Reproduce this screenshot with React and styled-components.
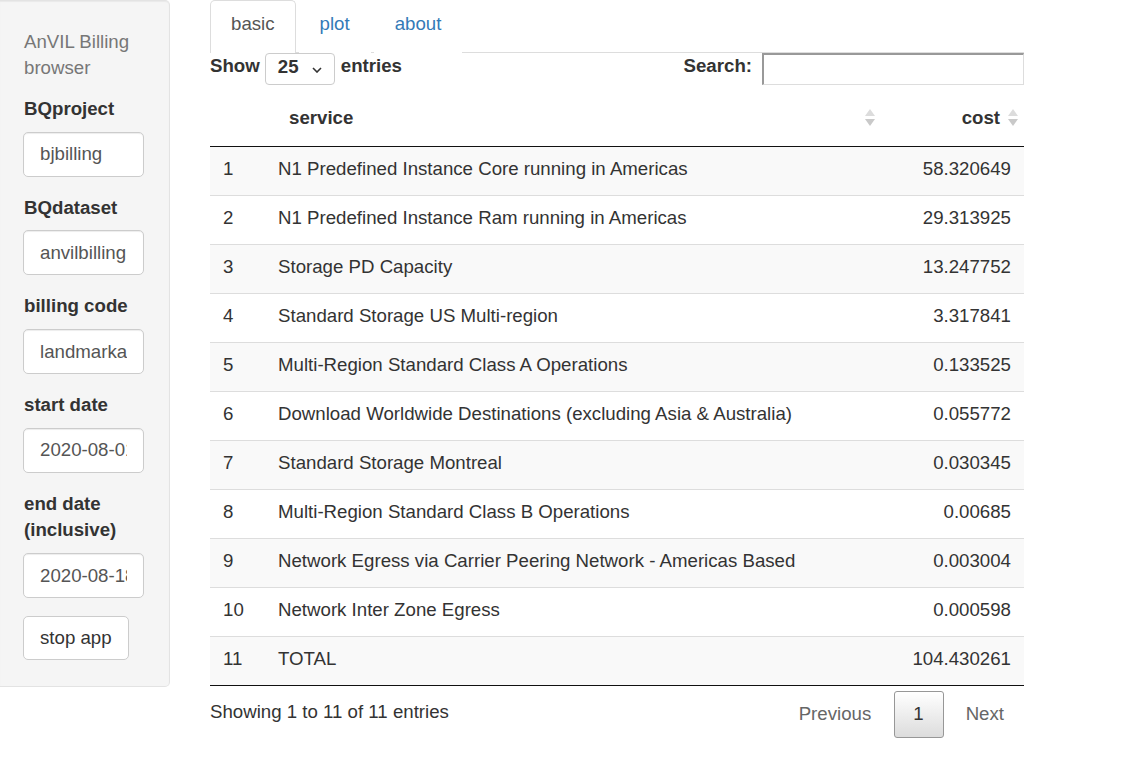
import React from 'react';
import styled, { createGlobalStyle } from 'styled-components';

const rows = [
    ['N1 Predefined Instance Core running in Americas', '58.320649'],
    ['N1 Predefined Instance Ram running in Americas', '29.313925'],
    ['Storage PD Capacity', '13.247752'],
    ['Standard Storage US Multi-region', '3.317841'],
    ['Multi-Region Standard Class A Operations', '0.133525'],
    ['Download Worldwide Destinations (excluding Asia & Australia)', '0.055772'],
    ['Standard Storage Montreal', '0.030345'],
    ['Multi-Region Standard Class B Operations', '0.00685'],
    ['Network Egress via Carrier Peering Network - Americas Based', '0.003004'],
    ['Network Inter Zone Egress', '0.000598'],
    ['TOTAL', '104.430261'],
];

const fields = [
    { label: 'BQproject', value: 'bjbilling' },
    { label: 'BQdataset', value: 'anvilbilling' },
    { label: 'billing code', value: 'landmarkanvil' },
    { label: 'start date', value: '2020-08-01' },
    { label: 'end date (inclusive)', value: '2020-08-18' },
];

const SortIcon = () => (
    <StyledSortIcon width="12" height="20" viewBox="0 0 12 20">
        <polygon points="6,1 11,8 1,8" fill="#dcdcdc" />
        <polygon points="1,11 11,11 6,18" fill="#c9c9c9" />
    </StyledSortIcon>
);

const App = () => {
    return (
        <StyledPage>
            <GlobalStyle />
            <StyledSidebar>
                <StyledTitle>AnVIL Billing browser</StyledTitle>
                {fields.map(f => (
                    <StyledFormGroup key={f.label}>
                        <StyledLabel>{f.label}</StyledLabel>
                        <StyledInput readOnly defaultValue={f.value} />
                    </StyledFormGroup>
                ))}
                <StyledButton>stop app</StyledButton>
            </StyledSidebar>

            <StyledMain>
                <StyledTabs>
                    <StyledTab active>basic</StyledTab>
                    <StyledTab>plot</StyledTab>
                    <StyledTab>about</StyledTab>
                </StyledTabs>

                <StyledControls>
                    <StyledControlLabel>
                        Show
                        <StyledSelect>
                            25
                            <svg width="10" height="6" viewBox="0 0 10 6">
                                <path d="M1 1 L5 5 L9 1" fill="none" stroke="#333" strokeWidth="1.6" />
                            </svg>
                        </StyledSelect>
                        entries
                    </StyledControlLabel>
                    <StyledControlLabel>
                        Search:
                        <StyledSearch />
                    </StyledControlLabel>
                </StyledControls>

                <StyledTable>
                    <colgroup>
                        <col style={{ width: 55 }} />
                        <col style={{ width: 616 }} />
                        <col style={{ width: 143 }} />
                    </colgroup>
                    <thead>
                        <tr>
                            <StyledTh />
                            <StyledTh>service<SortIcon /></StyledTh>
                            <StyledTh right>cost<SortIcon /></StyledTh>
                        </tr>
                    </thead>
                    <tbody>
                        {rows.map((r, i) => (
                            <StyledTr key={i} odd={i % 2 === 0}>
                                <StyledTd>{i + 1}</StyledTd>
                                <StyledTd>{r[0]}</StyledTd>
                                <StyledTd right>{r[1]}</StyledTd>
                            </StyledTr>
                        ))}
                    </tbody>
                </StyledTable>

                <StyledFooter>
                    <StyledInfo>Showing 1 to 11 of 11 entries</StyledInfo>
                    <StyledPaging>
                        <StyledPageBtn>Previous</StyledPageBtn>
                        <StyledPageBtn current>1</StyledPageBtn>
                        <StyledPageBtn>Next</StyledPageBtn>
                    </StyledPaging>
                </StyledFooter>
            </StyledMain>
        </StyledPage>
    );
};

export default App;

const GlobalStyle = createGlobalStyle`
    body {
        margin: 0;
        background: #fff;
        color: #333;
        font-family: "Liberation Sans", Arial, sans-serif;
        font-size: 18.67px;
        line-height: 26.67px;
    }
`;

const StyledPage = styled.div`
    display: flex;
    align-items: flex-start;
`;

const StyledSidebar = styled.div`
    width: 170px;
    box-sizing: border-box;
    background-color: #f5f5f5;
    border: 1px solid #e3e3e3;
    border-left: none;
    border-radius: 0 5px 5px 0;
    padding: 25px 20px 26px 23px;
    box-shadow: inset 0 1px 1px rgba(0, 0, 0, 0.05);
`;

const StyledTitle = styled.div`
    color: #777;
    margin: 3px 0 15px 1px;
    line-height: 26px;
`;

const StyledFormGroup = styled.div`
    margin-bottom: 18px;
`;

const StyledLabel = styled.div`
    font-weight: bold;
    margin: 0 0 9px 1px;
`;

const StyledInput = styled.input`
    display: block;
    width: 121px;
    height: 45px;
    box-sizing: border-box;
    padding: 0 16px;
    border: 1px solid #ccc;
    border-radius: 5px;
    background: #fff;
    color: #555;
    font-family: "Liberation Sans", Arial, sans-serif;
    font-size: 18.67px;
    box-shadow: inset 0 1px 1px rgba(0, 0, 0, 0.075);
    outline: none;
`;

const StyledButton = styled.button`
    display: block;
    margin-top: 5px;
    height: 44px;
    padding: 0 16px;
    border: 1px solid #ccc;
    border-radius: 5px;
    background: #fff;
    color: #333;
    font-family: "Liberation Sans", Arial, sans-serif;
    font-size: 18.67px;
`;

const StyledMain = styled.div`
    width: 814px;
    margin-left: 40px;
`;

const StyledTabs = styled.div`
    display: flex;
    gap: 3px;
    border-bottom: 1px solid #ddd;
    height: 52px;
`;

const StyledTab = styled.div`
    padding: 10px 20px 0;
    height: 53px;
    box-sizing: border-box;
    line-height: 26.67px;
    border: 1px solid ${props => props.active ? '#ddd' : 'transparent'};
    border-bottom: none;
    border-radius: 5px 5px 0 0;
    background: #fff;
    color: ${props => props.active ? '#555' : '#337ab7'};
    margin-bottom: -1px;
`;

const StyledControls = styled.div`
    display: flex;
    justify-content: space-between;
    margin-bottom: 8px;
`;

const StyledControlLabel = styled.div`
    display: flex;
    align-items: flex-start;
    font-weight: bold;
    line-height: 26px;
`;

const StyledSelect = styled.div`
    display: flex;
    align-items: flex-start;
    justify-content: space-between;
    width: 70px;
    height: 32px;
    box-sizing: border-box;
    margin: 0 6px 0 5px;
    padding: 0 12px 0 12px;
    border: 1px solid #ccc;
    border-radius: 4px;
    background: #fff;
    font-weight: bold;
    line-height: 26px;

    svg {
        margin-top: 13px;
    }
`;

const StyledSearch = styled.div`
    width: 262px;
    height: 32px;
    box-sizing: border-box;
    margin-left: 10px;
    border-style: solid;
    border-width: 2px 1px 1px 2px;
    border-color: #999 #ddd #ddd #999;
    background: #fff;
`;

const StyledTable = styled.table`
    width: 814px;
    border-collapse: collapse;
    table-layout: fixed;
    border-bottom: 1px solid #111;
`;

const StyledTh = styled.th`
    position: relative;
    padding: 12px 24px 14px 24px;
    line-height: 26.67px;
    font-weight: bold;
    text-align: ${props => props.right ? 'right' : 'left'};
    border-bottom: 1px solid #111;
`;

const StyledSortIcon = styled.svg`
    position: absolute;
    right: 5px;
    top: 50%;
    margin-top: -11px;
`;

const StyledTr = styled.tr`
    background-color: ${props => props.odd ? '#f9f9f9' : '#fff'};
    border-top: 1px solid #ddd;

    &:first-child {
        border-top: none;
    }
`;

const StyledTd = styled.td`
    padding: 9px 13px 13px 13px;
    line-height: 26px;
    text-align: ${props => props.right ? 'right' : 'left'};
    white-space: nowrap;
`;

const StyledFooter = styled.div`
    display: flex;
    justify-content: space-between;
    align-items: flex-start;
`;

const StyledInfo = styled.div`
    padding-top: 13px;
`;

const StyledPaging = styled.div`
    display: flex;
    padding-top: 5px;
`;

const StyledPageBtn = styled.div`
    padding: 9px 19px 10px 18px;
    margin-left: 3px;
    line-height: 26.67px;
    border: 1px solid ${props => props.current ? '#979797' : 'transparent'};
    border-radius: 3px;
    color: ${props => props.current ? '#333' : '#666'};
    background: ${props => props.current ? 'linear-gradient(to bottom, #fff 0%, #dcdcdc 100%)' : 'transparent'};
`;
